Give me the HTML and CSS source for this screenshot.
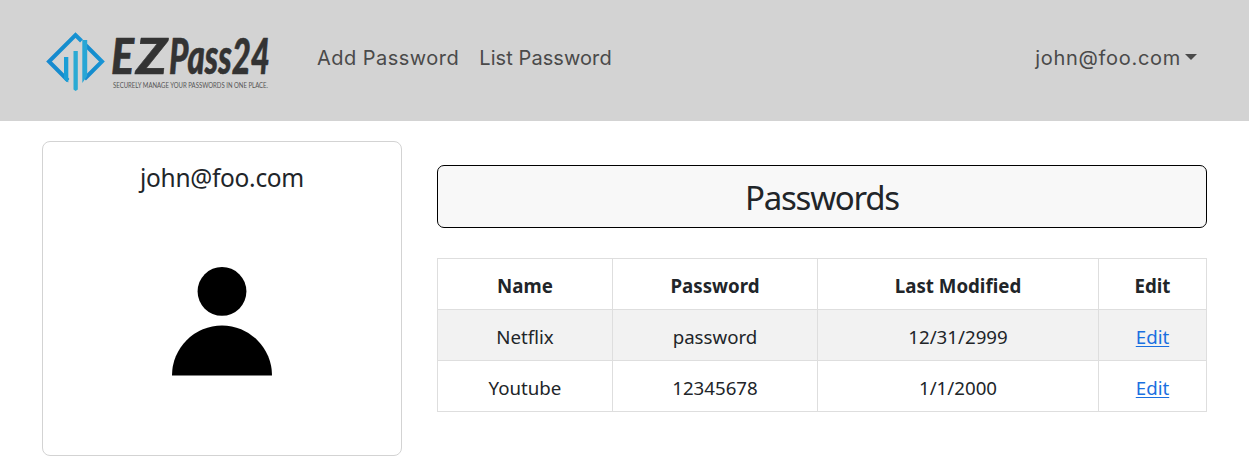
FILE: index.html
```html
<!DOCTYPE html>
<html lang="en">
<head>
<meta charset="utf-8">
<title>EZPass24</title>
<link rel="stylesheet" href="styles.css">
</head>
<body>
<header class="navbar">
  <a class="brand" href="#">
    <svg class="logo" width="230" height="64" viewBox="0 0 230 64" role="img" aria-label="EZPass24">
      <defs>
        <linearGradient id="edge" x1="0" y1="0" x2="1" y2="0">
          <stop offset="0" stop-color="#1789d0"/><stop offset=".5" stop-color="#148dcd"/><stop offset="1" stop-color="#1994d5"/>
        </linearGradient>
      </defs>
      <path d="M26 51.500L7 32.500L33.500 6L39.500 12" fill="none" stroke="url(#edge)" stroke-width="4"/>
      <path d="M44 16.500L60 32.500L42.500 50" fill="none" stroke="url(#edge)" stroke-width="4"/>
      <path d="M22 28h4.300v25.500l-4.300-3z" fill="#1a9ed6"/>
      <path d="M31.500 22h4.300v38.500l-2.150 1.500l-2.150-1.500z" fill="#2aaad4"/>
      <path d="M40.300 11h4.900v36l-4.900 7z" fill="#28a6d5"/>
      <text class="wordmark" y="45"><tspan x="69" textLength="23" lengthAdjust="spacingAndGlyphs">E</tspan><tspan x="94" textLength="31" lengthAdjust="spacingAndGlyphs">Z</tspan><tspan x="127" textLength="101" lengthAdjust="spacingAndGlyphs">Pass24</tspan></text>
      <text class="tagline" x="71" y="59" textLength="155" lengthAdjust="spacingAndGlyphs">SECURELY MANAGE YOUR PASSWORDS IN ONE PLACE.</text>
    </svg>
  </a>
  <nav class="links">
    <a href="#">Add Password</a>
    <a class="list" href="#">List Password</a>
  </nav>
  <a class="account" href="#"><span class="email">john@foo.com</span><span class="caret"></span></a>
</header>
<main class="content">
  <aside class="card">
    <h2 class="card-title">john@foo.com</h2>
    <svg class="avatar" width="100" height="109" viewBox="0 0 100 109">
      <circle cx="50" cy="24.400" r="24.400"/><path d="M0 108.500a50 50 0 0 1 100 0z"/>
    </svg>
  </aside>
  <section class="vault">
    <h1 class="heading"><span>Passwords</span></h1>
    <table class="table">
      <colgroup><col class="c-name"><col class="c-pass"><col class="c-date"><col class="c-edit"></colgroup>
      <thead><tr><th>Name</th><th>Password</th><th>Last Modified</th><th>Edit</th></tr></thead>
      <tbody>
        <tr><td>Netflix</td><td>password</td><td>12/31/2999</td><td><a href="#">Edit</a></td></tr>
        <tr><td>Youtube</td><td>12345678</td><td>1/1/2000</td><td><a href="#">Edit</a></td></tr>
      </tbody>
    </table>
  </section>
</main>
</body>
</html>
```
FILE: styles.css
```css
* { box-sizing: border-box; }
body { margin: 0; background: #fff; color: #212529; font-family: "Noto Sans", sans-serif; font-size: 18.700px; }
.navbar { display: flex; align-items: center; height: 121px; padding: 0 52px 0 42px; background: #d3d3d3; font-family: Inter, sans-serif; font-size: 20px; }
.navbar a { color: #4a4a4a; text-decoration: none; }
.brand { display: flex; margin-right: 45px; }
.logo { overflow: visible; }
.wordmark { font: italic 900 50px Lato, sans-serif; fill: #333; stroke: #333; stroke-width: .6; stroke-linejoin: round; }
.tagline { font: 400 6.800px Lato, sans-serif; fill: #555; }
.links { display: flex; gap: 20px; margin-top: -5px; letter-spacing: .48px; }
.links .list { letter-spacing: .08px; }
.account { display: flex; align-items: center; margin: -5px 0 0 auto; }
.email { letter-spacing: .7px; }
.caret { margin: -2px 0 0 4px; border: 6px solid transparent; border-top-color: #4a4a4a; border-bottom: 0; }
.content { display: flex; gap: 35px; padding: 20px 42px 12px; }
.card { display: flex; flex-direction: column; align-items: center; width: 360px; height: 315px; padding-top: 20px; border: 1px solid #d3d3d3; border-radius: 8px; }
.card-title { margin: 0 0 73px; font-size: 24.500px; line-height: 32px; font-weight: 400; letter-spacing: -.3px; }
.avatar { display: block; }
.vault { width: 770px; padding-top: 24px; }
.heading { display: flex; justify-content: center; align-items: center; height: 63px; margin: 0 0 30px; padding-top: 2px; border: 1px solid #000; border-radius: 7px; background: #f8f8f8; font-size: 33px; font-weight: 400; letter-spacing: -1.250px; }
.table { width: 770px; table-layout: fixed; border-collapse: collapse; text-align: center; }
.c-name { width: 175px; }
.c-pass { width: 205px; }
.c-date { width: 281px; }
.c-edit { width: 108px; }
.table tr { height: 51px; }
.table th, .table td { padding: 2px 0 0; border: 1px solid #dedede; }
.table th { font-weight: 700; }
.table tbody tr:first-child { background: #f2f2f2; }
.table a { color: #1a6fe0; text-underline-offset: 2px; text-decoration-thickness: 1px; }
```
